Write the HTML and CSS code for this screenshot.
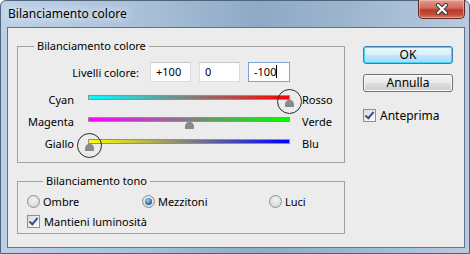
FILE: index.html
```html
<!DOCTYPE html>
<html lang="it">
<head>
    <meta charset="UTF-8">
    <title>Bilanciamento colore</title>
    <link rel="stylesheet" href="styles.css">
</head>
<body>
    <div class="window">
        <div class="titlebar">
            <span class="title">Bilanciamento colore</span>
            <button class="close" title="Chiudi">
                <svg width="14" height="12" viewBox="0 0 14 12">
                    <path d="M3 2 L11 10 M11 2 L3 10" stroke="#3a3a3a" stroke-width="4.2" stroke-linecap="round"/>
                    <path d="M3 2 L11 10 M11 2 L3 10" stroke="#fff" stroke-width="2.2" stroke-linecap="round"/>
                </svg>
            </button>
        </div>
        <div class="client">
            <div class="main">
                <fieldset class="group levels">
                    <legend>Bilanciamento colore</legend>
                    <div class="levels-row">
                        <span class="levels-label">Livelli colore:</span>
                        <span class="field">+100</span>
                        <span class="field">0</span>
                        <span class="field active">-100<i class="caret"></i></span>
                    </div>
                    <div class="sliders">
                        <div class="slider-row">
                            <span class="side-left">Cyan</span>
                            <div class="track cyan-red"><span class="thumb marked" style="left: 100%"></span></div>
                            <span class="side-right">Rosso</span>
                        </div>
                        <div class="slider-row">
                            <span class="side-left">Magenta</span>
                            <div class="track magenta-green"><span class="thumb" style="left: 50%"></span></div>
                            <span class="side-right">Verde</span>
                        </div>
                        <div class="slider-row">
                            <span class="side-left">Giallo</span>
                            <div class="track yellow-blue"><span class="thumb marked" style="left: 0%"></span></div>
                            <span class="side-right">Blu</span>
                        </div>
                    </div>
                </fieldset>
                <fieldset class="group tone">
                    <legend>Bilanciamento tono</legend>
                    <div class="radios">
                        <label class="opt"><span class="radio"></span>Ombre</label>
                        <label class="opt"><span class="radio on"></span>Mezzitoni</label>
                        <label class="opt"><span class="radio"></span>Luci</label>
                    </div>
                    <label class="opt"><span class="check"></span>Mantieni luminosità</label>
                </fieldset>
            </div>
            <div class="side">
                <button class="btn default">OK</button>
                <button class="btn">Annulla</button>
                <label class="opt preview"><span class="check"></span>Anteprima</label>
            </div>
        </div>
    </div>
</body>
</html>
```

FILE: styles.css
```css
body {
    margin: 0;
    font-family: "Noto Sans", "Open Sans", sans-serif;
    font-size: 11px;
    color: #000;
}
.window {
    width: 470px;
    height: 254px;
    box-sizing: border-box;
    border: 1px solid #4f6379;
    border-radius: 6px 6px 0 0;
    background: linear-gradient(90deg, #bcd1e7 0%, #a9c0d9 30%, #8eaac6 55%, #9db6cf 75%, #b7cbe0 100%);
    display: flex;
    flex-direction: column;
}
.titlebar {
    height: 26px;
    display: flex;
    align-items: flex-start;
    justify-content: space-between;
}
.title {
    margin: 5px 0 0 7px;
    font-size: 12px;
    line-height: 16px;
    text-shadow: 0 0 8px #fff, 0 0 14px #fff;
}
.close {
    width: 47px;
    height: 19px;
    margin: -1px 4px 0 0;
    padding: 0;
    border: 1px solid #5b2a24;
    border-top: none;
    border-radius: 0 0 5px 5px;
    background: linear-gradient(#e49a8c 0%, #cf6a5a 45%, #b83a2b 55%, #c44a36 80%, #dd7a62 100%);
    box-shadow: inset 0 0 0 1px rgba(255, 210, 200, 0.5);
    display: flex;
    align-items: center;
    justify-content: center;
}
.client {
    flex: 1;
    margin: 0 4px 5px 6px;
    border: 1px solid #5f738b;
    background: #ececec;
    display: flex;
    padding: 11px 10px 0 9px;
    gap: 18px;
}
.main {
    width: 328px;
}
.group {
    margin: 0;
    padding: 0;
    border: 1px solid #a0a0a0;
    min-width: 0;
}
.group legend {
    margin-left: 16px;
    padding: 0 3px;
    line-height: 14px;
}
.levels-row {
    display: flex;
    align-items: center;
    gap: 8px;
    margin-top: 9px;
}
.levels-label {
    width: 121px;
    text-align: right;
    margin-right: 3px;
}
.field {
    width: 41px;
    height: 20px;
    box-sizing: border-box;
    border: 1px solid #dcdcdc;
    border-top-color: #c8c8c8;
    background: #fff;
    padding-left: 5px;
    line-height: 18px;
}
.field.active {
    border-color: #7da2ce;
    width: 42px;
}
.caret {
    display: inline-block;
    width: 1px;
    height: 13px;
    background: #000;
    vertical-align: -2px;
}
.sliders {
    margin: 9px 0 6px;
}
.slider-row {
    display: grid;
    grid-template-columns: 70px 202px auto;
    height: 22px;
    align-items: start;
}
.slider-row:last-child {
    height: 21px;
}
.side-left {
    text-align: right;
    padding-right: 14px;
    line-height: 14px;
    margin-top: 2px;
}
.side-right {
    padding-left: 12px;
    line-height: 14px;
    margin-top: 2px;
}
.track {
    position: relative;
    height: 3px;
    margin-top: 4px;
    border: 1px solid #8f8f8f;
}
.cyan-red {
    background: linear-gradient(90deg, #00ffff, #ff0000);
}
.magenta-green {
    background: linear-gradient(90deg, #ff00ff, #00ff00);
}
.yellow-blue {
    background: linear-gradient(90deg, #ffff00, #0000ff);
}
.thumb {
    position: absolute;
    top: 3px;
    width: 9px;
    height: 8px;
    margin-left: -4px;
    background: #8a8a8a;
    clip-path: polygon(50% 0, 85% 25%, 100% 55%, 100% 100%, 0 100%, 0 55%, 15% 25%);
}
.thumb.marked {
    clip-path: none;
    background: none;
}
.thumb.marked::before {
    content: "";
    position: absolute;
    inset: 0;
    background: #8a8a8a;
    clip-path: polygon(50% 0, 85% 25%, 100% 55%, 100% 100%, 0 100%, 0 55%, 15% 25%);
}
.thumb.marked::after {
    content: "";
    position: absolute;
    left: -8px;
    top: -10px;
    width: 23px;
    height: 23px;
    border: 1px solid #2a2a2a;
    border-radius: 50%;
}
.tone {
    margin-top: 11px;
    padding: 5px 0 4px 9px;
}
.radios {
    display: grid;
    grid-template-columns: 115px 127px auto;
    margin-bottom: 4px;
}
.opt {
    display: flex;
    align-items: center;
    gap: 3px;
    height: 16px;
}
.radio {
    width: 11px;
    height: 11px;
    border: 1px solid #8e8f8f;
    border-radius: 50%;
    background: radial-gradient(circle at 50% 40%, #f4f4f4, #d0d0d0);
    position: relative;
}
.radio.on::after {
    content: "";
    position: absolute;
    left: 2px;
    top: 2px;
    width: 7px;
    height: 7px;
    border-radius: 50%;
    background: radial-gradient(circle at 40% 35%, #9fd4f7, #1c5f9b 70%);
}
.check {
    width: 11px;
    height: 11px;
    border: 1px solid #8e8f8f;
    background: linear-gradient(135deg, #dcdcdc, #fdfdfd);
    position: relative;
    margin-right: 1px;
}
.check::after {
    content: "";
    position: absolute;
    left: 3px;
    top: 0px;
    width: 3px;
    height: 7px;
    border: solid #3a4f8f;
    border-width: 0 2px 2px 0;
    transform: rotate(40deg);
}
.side {
    display: flex;
    flex-direction: column;
    align-items: flex-start;
    padding-top: 7px;
}
.btn {
    width: 90px;
    height: 18px;
    margin-bottom: 10px;
    padding: 0;
    font: inherit;
    font-size: 12px;
    line-height: 16px;
    border: 1px solid #707070;
    border-radius: 3px;
    background: linear-gradient(#f2f2f2 0%, #ebebeb 50%, #dddddd 51%, #cfcfcf 100%);
    box-shadow: inset 0 0 0 1px #fcfcfc;
}
.btn.default {
    border-color: #3c7fb1;
    background: linear-gradient(#eaf6fd 0%, #d9f0fc 50%, #bee6fd 51%, #a7d9f5 100%);
    box-shadow: inset 0 0 0 1px #48d5fb;
}
.preview {
    margin-top: 5px;
    font-size: 12px;
}
```
